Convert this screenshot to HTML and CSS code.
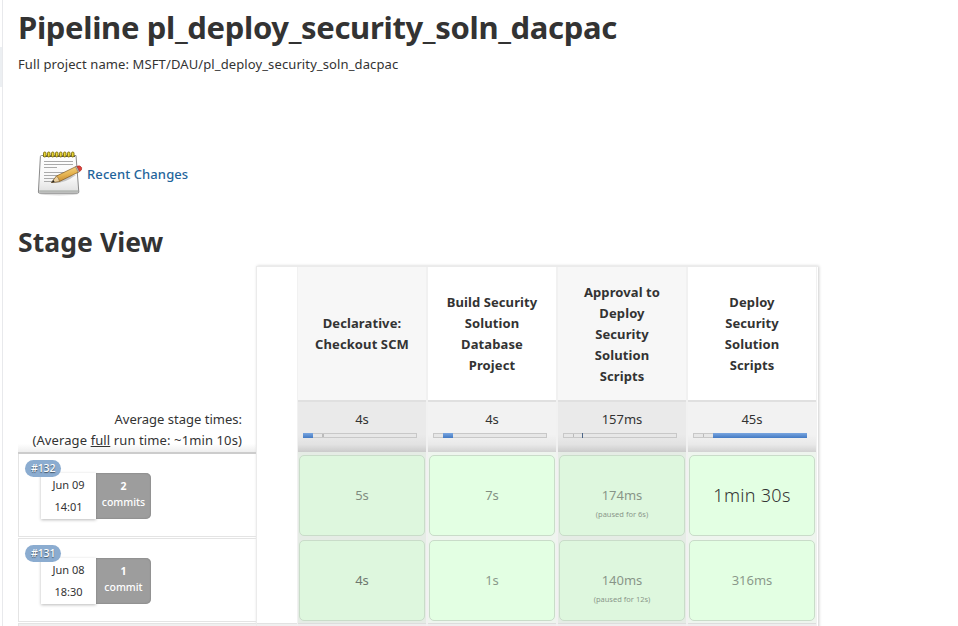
FILE: index.html
```
<!DOCTYPE html>
<html lang="en">
<head>
<meta charset="utf-8">
<title>Pipeline pl_deploy_security_soln_dacpac</title>
<link rel="stylesheet" href="styles.css">
</head>
<body>
<div class="page">
  <aside class="side"><div class="side-item"></div></aside>
  <main class="main">
    <h1><span>Pipeline pl_deploy_security_soln_dacpac</span></h1>
    <p class="project"><span>Full project name: MSFT/DAU/pl_deploy_security_soln_dacpac</span></p>
    <div class="changes">
      <svg width="48" height="48" viewBox="0 0 48 48" aria-hidden="true">
        <defs>
          <linearGradient id="paper" x1="0" y1="0" x2="0" y2="1"><stop offset="0" stop-color="#fff"/><stop offset=".6" stop-color="#f7f7f7"/><stop offset="1" stop-color="#dedede"/></linearGradient>
          <linearGradient id="wood" x1=".3" y1="0" x2=".6" y2="1"><stop offset="0" stop-color="#f8e09a"/><stop offset=".5" stop-color="#e6b552"/><stop offset="1" stop-color="#c07f28"/></linearGradient>
        </defs>
        <ellipse cx="24" cy="44" rx="19" ry="1.500" fill="#ddd"/>
        <path d="M6.500 5.500H41L43.800 42Q43.800 43.200 42.500 43.200H4.700Q3.300 43.200 3.400 42L5.400 6.500Q5.500 5.500 6.500 5.500Z" fill="url(#paper)" stroke="#8a8a8a"/>
        <path d="M4.200 40.200H43L43.200 42.500H4.200Z" fill="#b5b8b5"/>
        <path d="M9 11.500H38M9 14.500H38M9 17.500H22M9 22.500H34M9 25.500H27M9 28.500H22M9 31.500H18" stroke="#aaa" fill="none"/>
        <path d="M8 6.500H40" stroke="#555"/>
        <g fill="#e8d637" stroke="#7d6b08" stroke-width=".9"><rect x="8.500" y="2" width="2.500" height="5" rx="1.200"/><rect x="12.500" y="2" width="2.500" height="5" rx="1.200"/><rect x="16.500" y="2" width="2.500" height="5" rx="1.200"/><rect x="20.500" y="2" width="2.500" height="5" rx="1.200"/><rect x="24.500" y="2" width="2.500" height="5" rx="1.200"/><rect x="28.500" y="2" width="2.500" height="5" rx="1.200"/><rect x="32.500" y="2" width="2.500" height="5" rx="1.200"/><rect x="36.500" y="2" width="2.500" height="5" rx="1.200"/></g>
        <path d="M18 33Q29 34 41 25L33 26Z" fill="#c4c4c4"/>
        <path d="M16.500 32.500L21.500 26L41 16.500L43.800 22L24.500 31.500Z" fill="url(#wood)" stroke="#6f4814" stroke-width=".6"/>
        <path d="M16.500 32.500L21.500 26Q24 28 24.500 31.500Z" fill="#ead0a0" stroke="#6f5733" stroke-width=".5"/>
        <path d="M16.300 32.800L18.500 30L19.600 32Z" fill="#222"/>
        <path d="M40.500 16.800L43.200 22.300L44.600 21.500L42 16.200Z" fill="#bbb" stroke="#666" stroke-width=".4"/>
        <path d="M42 16.200Q45.300 15 46.700 17.700Q47.200 20.200 44.600 21.500Z" fill="#e04038" stroke="#a12520" stroke-width=".6"/>
      </svg>
      <a>Recent Changes</a>
    </div>
    <h2><span>Stage View</span></h2>
    <div class="stage">
      <div class="runs">
        <div class="averages">
          <div>Average stage times:</div>
          <div><span class="av2">(Average <u>full</u> run time: ~1min 10s)</span></div>
        </div>
        <div class="run">
          <span class="badge">#132</span>
          <div class="info"><div class="date"><span>Jun 09</span><span>14:01</span></div><div class="commits"><b>2</b><span>commits</span></div></div>
        </div>
        <div class="run">
          <span class="badge">#131</span>
          <div class="info"><div class="date"><span>Jun 08</span><span>18:30</span></div><div class="commits"><b>1</b><span>commit</span></div></div>
        </div>
        <div class="run next"></div>
      </div>
      <div class="board">
        <div class="gutter"><div class="gutter-next"></div></div>
        <section class="col odd">
          <div class="name"><span>Declarative:<br>Checkout SCM</span></div>
          <div class="avg"><span>4s</span><div class="bar b1"><i></i><em></em></div></div>
          <div class="cell"><div class="box"><span class="t6">5s</span></div></div>
          <div class="cell"><div class="box"><span class="t8">4s</span></div></div>
          <div class="foot"></div>
        </section>
        <section class="col">
          <div class="name"><span>Build Security<br>Solution<br>Database<br>Project</span></div>
          <div class="avg"><span>4s</span><div class="bar b2"><i></i></div></div>
          <div class="cell"><div class="box"><span class="t6">7s</span></div></div>
          <div class="cell"><div class="box"><span class="t5">1s</span></div></div>
          <div class="foot"></div>
        </section>
        <section class="col odd">
          <div class="name"><span>Approval to<br>Deploy<br>Security<br>Solution<br>Scripts</span></div>
          <div class="avg"><span>157ms</span><div class="bar b3"><i></i><em></em></div></div>
          <div class="cell"><div class="box"><span class="t5">174ms</span><small>(paused for 6s)</small></div></div>
          <div class="cell"><div class="box"><span class="t5">140ms</span><small>(paused for 12s)</small></div></div>
          <div class="foot"></div>
        </section>
        <section class="col">
          <div class="name"><span>Deploy<br>Security<br>Solution<br>Scripts</span></div>
          <div class="avg"><span>45s</span><div class="bar b4"><i></i><em></em></div></div>
          <div class="cell"><div class="box"><span class="big">1min 30s</span></div></div>
          <div class="cell"><div class="box"><span class="t5">316ms</span></div></div>
          <div class="foot"></div>
        </section>
      </div>
    </div>
  </main>
</div>
</body>
</html>
```
FILE: styles.css
```
* { box-sizing: border-box; }
body { margin: 0; background: #fff; color: #333; font: 14px/21px "Noto Sans", "Open Sans", sans-serif; overflow: hidden; }
.page { display: flex; height: 626px; overflow: hidden; }
.side { width: 3px; flex: none; border-right: 1px solid #e8e9ec; padding-top: 47px; }
.side-item { height: 40px; background: #eceff2; }
.main { flex: 1; padding-left: 15px; }
h1, h2, p { margin: 0; white-space: nowrap; }
h1 { font-size: 31px; line-height: 40px; padding-top: 7px; letter-spacing: -.34px; }
.project { font-size: 13px; line-height: 20px; margin-top: 7px; letter-spacing: .11px; }
.changes { display: flex; align-items: center; gap: 4px; height: 48px; margin: 76px 0 0 17px; }
.changes a { color: #1f659b; font-weight: 500; font-size: 13px; letter-spacing: .1px; }
h2 { font-size: 26.5px; line-height: 34px; margin-top: 27px; letter-spacing: .08px; }
.stage { display: flex; margin-top: 7px; height: 370px; width: 800px; }
.runs { width: 238px; flex: none; padding-top: 135px; }
.averages { height: 53px; padding: 8px 14px 0 0; text-align: right; font-size: 13px; white-space: nowrap; border-bottom: 2px solid #ccc; background: linear-gradient(#fff 84%, #eee); }
.av2 { letter-spacing: .11px; }
.run { height: 84px; margin-bottom: 1px; border: 1px solid #e4e4e4; border-right: 0; padding: 5px 0 0 6px; position: relative; }
.averages + .run { height: 83px; border-top: 0; }
.next { background: #f0f0f0; }
.badge { position: absolute; left: 6px; top: 6px; height: 17px; padding: 0 6px; border-radius: 9px; background: #8bacd0; color: #fff; font-size: 10.500px; font-weight: 500; letter-spacing: -.1px; line-height: 17px; text-shadow: 0 1px 1px #456; z-index: 1; }
.info { display: flex; margin: 14px 0 0 16px; width: 110px; height: 46px; }
.date { width: 55px; display: flex; flex-direction: column; text-align: center; font-size: 11px; line-height: 22px; box-shadow: 0 1px 3px #bbb; background: #fff; padding-top: 1px; }
.commits { width: 55px; display: flex; flex-direction: column; text-align: center; color: #fff; background: #9d9d9d; border-radius: 0 5px 5px 0; font-size: 10.500px; font-weight: 500; line-height: 16px; padding-top: 5px; box-shadow: inset 0 0 2px #777; }
.board { display: flex; width: 562px; box-shadow: 1px 0 3px #ccc; background: #fff; border: solid #ebebeb; border-width: 1px 0 0 1px; }
.gutter { width: 40px; padding-top: 356px; }
.gutter-next { height: 13px; background: #f0f0f0; border-top: 1px solid #e2e2e2; }
.col { width: 130px; border: solid #f1f1f1; border-width: 0 1px; background: #eef5ee; }
.name { height: 133px; background: #fff; display: flex; justify-content: center; align-items: center; text-align: center; font-weight: 700; font-size: 13px; letter-spacing: .1px; padding-top: 1px; }
.odd { background: #e5ece5; }
.odd .name { background: #f7f7f7; }
.avg { height: 52px; border-top: 2px solid #e0e0e0; background: linear-gradient(#f2f2f2 65%, #e9e9e9 85%, #d2d2d2); text-align: center; padding: 7px 0 0; font-size: 13px; }
.odd .avg { background: linear-gradient(#eaeaea 65%, #e2e2e2 85%, #cbcbcb); }
.bar { width: 114px; height: 5px; margin: 3px 0 0 5px; border: 1px solid #c8c8c8; background: #e7e7e7; display: flex; }
.bar i { height: 5px; margin-top: -1px; background: linear-gradient(#79a6e0, #447ac3); }
.bar em { width: 1px; background: #bbb; }
.b1 i { width: 10px; margin-left: -1px; }
.b1 em { margin-left: 9px; width: 2px; }
.b2 i { width: 10px; margin-left: 9px; }
.b3 i { order: 2; width: 1px; margin-left: 8px; background: #4d6688; }
.b3 em { margin-left: 9px; }
.b4 i { order: 2; width: 94px; margin: -1px -1px 0 auto; }
.b4 em { margin-left: 9px; }
.cell { height: 85px; padding: 3px 1px 0; }
.box { height: 81px; border: 1px solid #c9dcc9; border-radius: 5px; background: #e3ffe3; display: flex; flex-direction: column; align-items: center; padding-top: 29px; font-size: 13px; white-space: nowrap; }
.odd .box { background: #def7de; }
.t5 { opacity: .5; } .t6 { opacity: .55; } .t8 { opacity: .65; }
.big { font-size: 18px; font-weight: 300; letter-spacing: .3px; }
.box small { font-size: 7.5px; line-height: 17px; opacity: .5; }
.foot { height: 14px; margin-top: 1px; background: #eee; border-top: 1px solid #ddd; }
```
